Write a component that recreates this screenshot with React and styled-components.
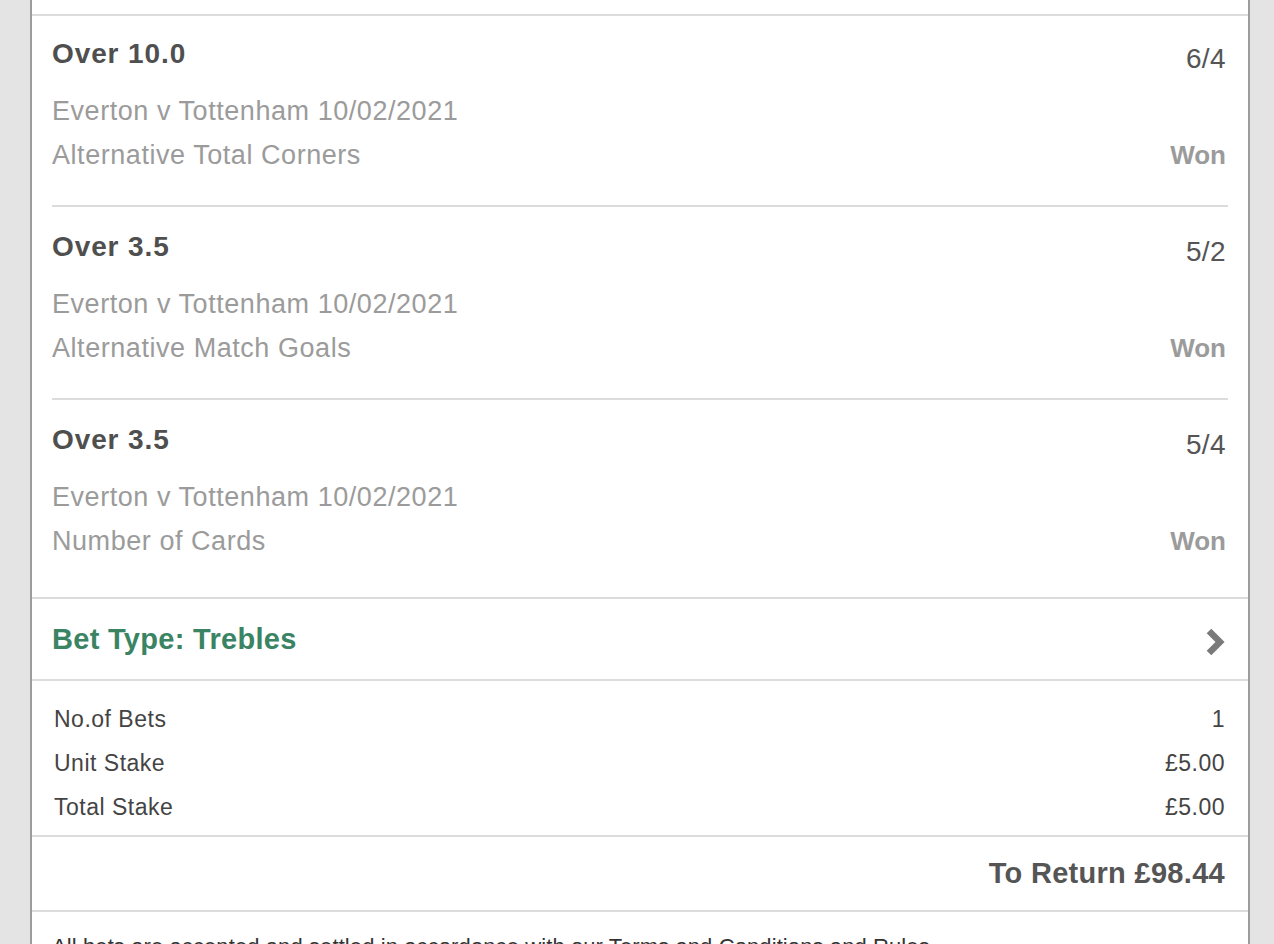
import React from "react"
import styled, { createGlobalStyle } from "styled-components"

const selections = [
    { title: "Over 10.0", odds: "6/4", event: "Everton v Tottenham 10/02/2021", market: "Alternative Total Corners", result: "Won" },
    { title: "Over 3.5", odds: "5/2", event: "Everton v Tottenham 10/02/2021", market: "Alternative Match Goals", result: "Won" },
    { title: "Over 3.5", odds: "5/4", event: "Everton v Tottenham 10/02/2021", market: "Number of Cards", result: "Won" },
]

const summary = [
    { label: "No.of Bets", value: "1" },
    { label: "Unit Stake", value: "£5.00" },
    { label: "Total Stake", value: "£5.00" },
]

const Chevron = () => (
    <ChevronSvg width="22" height="30" viewBox="0 0 22 30">
        <polyline points="5,4 16,15 5,26" fill="none" stroke="#7a7a7a" strokeWidth="6.5" strokeLinejoin="miter" />
    </ChevronSvg>
)

export default function App() {
    return (
        <Page>
            <GlobalStyle />
            <Panel>
                <TopBar />
                <Selections>
                    {selections.map((s, i) => (
                        <Selection key={i}>
                            <TitleRow>
                                <Title>{s.title}</Title>
                                <Odds>{s.odds}</Odds>
                            </TitleRow>
                            <Detail>{s.event}</Detail>
                            <DetailRow>
                                <Detail>{s.market}</Detail>
                                <Result>{s.result}</Result>
                            </DetailRow>
                        </Selection>
                    ))}
                </Selections>
                <BetType>
                    <BetTypeLabel>Bet Type: Trebles</BetTypeLabel>
                    <Chevron />
                </BetType>
                <Summary>
                    {summary.map(row => (
                        <SummaryRow key={row.label}>
                            <span>{row.label}</span>
                            <span>{row.value}</span>
                        </SummaryRow>
                    ))}
                </Summary>
                <ReturnRow>To Return £98.44</ReturnRow>
                <Footer>All bets are accepted and settled in accordance with our Terms and Conditions and Rules.</Footer>
            </Panel>
        </Page>
    )
}

const GlobalStyle = createGlobalStyle`
    html, body {
        margin: 0;
        padding: 0;
        background: #e4e4e4;
        overflow: hidden;
    }
    body {
        font-family: "Liberation Sans", Arial, sans-serif;
    }
`

const Page = styled.div`
    padding: 0 24px 0 30px;
    min-height: 944px;
    background: #e4e4e4;
`

const Panel = styled.div`
    background: #fff;
    border-left: 2px solid #9c9c9c;
    border-right: 2px solid #9c9c9c;
    min-height: 944px;
`

const TopBar = styled.div`
    height: 14px;
    border-bottom: 2px solid #dcdcdc;
`

const Selections = styled.div`
    padding: 0 20px;
`

const Selection = styled.div`
    padding: 21px 0 28px;
    border-bottom: 2px solid #dcdcdc;

    & + & {
        padding-top: 23px;
    }

    &:last-child {
        border-bottom: none;
        padding-bottom: 34px;
    }
`

const TitleRow = styled.div`
    display: flex;
    justify-content: space-between;
    align-items: flex-end;
    height: 34px;
    margin-bottom: 18px;
    padding-right: 2px;
`

const Title = styled.div`
    font-size: 28px;
    font-weight: bold;
    letter-spacing: 0.9px;
    color: #4f4f4f;
    line-height: 34px;
`

const Odds = styled.div`
    font-size: 28px;
    letter-spacing: 0.4px;
    color: #555;
    line-height: 34px;
    position: relative;
    top: 5px;
`

const DetailRow = styled.div`
    display: flex;
    justify-content: space-between;
    align-items: center;
    padding-right: 2px;
`

const Detail = styled.div`
    font-size: 27px;
    letter-spacing: 0.55px;
    color: #9b9b9b;
    line-height: 44px;
`

const Result = styled.div`
    font-size: 26px;
    font-weight: bold;
    color: #9b9b9b;
    line-height: 44px;
`

const BetType = styled.div`
    display: flex;
    justify-content: space-between;
    align-items: center;
    height: 80px;
    padding: 0 22px 0 20px;
    border-top: 2px solid #dcdcdc;
    border-bottom: 2px solid #dcdcdc;
`

const BetTypeLabel = styled.div`
    font-size: 29px;
    font-weight: bold;
    letter-spacing: 0.3px;
    color: #3a8464;
`

const ChevronSvg = styled.svg`
    margin-top: 6px;
    filter: blur(0.7px);
`

const Summary = styled.div`
    padding: 16px 23px 6px 22px;
    border-bottom: 2px solid #dcdcdc;
`

const SummaryRow = styled.div`
    display: flex;
    justify-content: space-between;
    font-size: 23px;
    letter-spacing: 0.5px;
    line-height: 44px;
    color: #444;
`

const ReturnRow = styled.div`
    height: 73px;
    padding: 0 23px;
    display: flex;
    align-items: center;
    justify-content: flex-end;
    font-size: 29px;
    font-weight: bold;
    letter-spacing: 0.3px;
    color: #555;
    border-bottom: 2px solid #dcdcdc;
`

const Footer = styled.div`
    padding: 20px 20px;
    font-size: 22px;
    letter-spacing: 0.1px;
    line-height: 30px;
    color: #333;
`
